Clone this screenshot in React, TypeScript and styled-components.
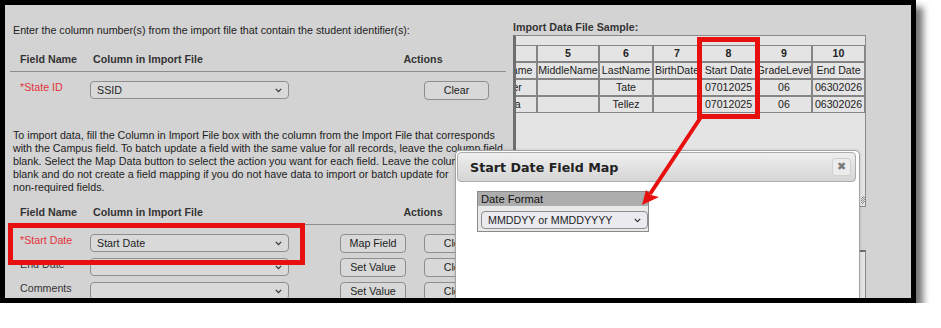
import styled, { createGlobalStyle } from "styled-components";

const GlobalStyle = createGlobalStyle`
  html, body {
    margin: 0;
    padding: 0;
    background: #fff;
  }
  body {
    font-family: "Liberation Sans", Arial, sans-serif;
    font-size: 10.7px;
    color: #222;
  }
`;

const Frame = styled.div`
  position: relative;
  width: 916px;
  height: 303px;
  box-sizing: border-box;
  border: 5px solid #000;
  overflow: hidden;
  box-shadow: 7px 7px 7px rgba(0, 0, 0, 0.55);
`;

const Screen = styled.div`
  display: flex;
  height: 100%;
  background: #d3d3d3;
`;

const LeftPane = styled.div`
  flex-shrink: 0;
  width: 496px;
  padding: 19px 0 0 5px;
`;

const Intro = styled.div`
  padding-left: 3px;
  line-height: 13px;
  white-space: nowrap;
`;

const HeaderRow = styled.div<{ $top: number }>`
  display: grid;
  grid-template-columns: 80px 250px 166px;
  align-items: center;
  height: 24px;
  margin-top: ${(p) => p.$top}px;
  border-bottom: 1px solid #8c8c8c;
  font-weight: bold;
  color: #333;
`;

const HeadCell = styled.div<{ $pad?: number; $center?: boolean }>`
  padding-left: ${(p) => p.$pad ?? 0}px;
  text-align: ${(p) => (p.$center ? "center" : "left")};
`;

const Rows = styled.div`
  display: flex;
  flex-direction: column;
  gap: 6px;
  padding-top: 9px;
`;

const Row = styled.div`
  display: grid;
  grid-template-columns: 80px 250px 84px 82px;
  height: 18px;
  align-items: start;
`;

const Label = styled.div<{ $required?: boolean }>`
  padding-left: 10px;
  line-height: 13px;
  white-space: nowrap;
  color: ${(p) => (p.$required ? "#e4323a" : "#333")};
`;

const Select = styled.div<{ $w: number; $bg?: string }>`
  display: flex;
  align-items: center;
  box-sizing: border-box;
  width: ${(p) => p.$w}px;
  height: 18px;
  padding: 0 6px 0 6px;
  border: 1px solid #8e8e8e;
  border-radius: 4px;
  background: ${(p) => p.$bg ?? "#d9d9d9"};
  color: #1e1e1e;
  white-space: nowrap;
`;

const ChevronBox = styled.span`
  display: flex;
  margin-left: auto;
`;

const Button = styled.div<{ $w: number }>`
  box-sizing: border-box;
  width: ${(p) => p.$w}px;
  height: 19px;
  line-height: 17px;
  border: 1px solid #8e8e8e;
  border-radius: 4px;
  background: #d8d8d8;
  text-align: center;
  color: #222;
  white-space: nowrap;
`;

const Para = styled.div`
  margin-top: 30px;
  padding-left: 3px;
  line-height: 13px;
  white-space: nowrap;
`;

const RightPane = styled.div`
  display: flex;
  flex-direction: column;
  width: 353px;
  margin-left: 7px;
  padding-top: 16px;
`;

const PanelTitle = styled.div`
  font-weight: bold;
  line-height: 13px;
  color: #333;
`;

const Panel = styled.div`
  position: relative;
  box-sizing: border-box;
  height: 172px;
  margin-top: 1px;
  padding-top: 9px;
  border: 1px solid #8a8a8a;
  border-left: 3px solid #6e6e6e;
  background: #e4e4e4;
`;

const LowerPanel = styled.div`
  flex: 1;
  margin-top: 43px;
  border-top: 2px solid #6e6e6e;
  border-right: 1px solid #8a8a8a;
  background: #e4e4e4;
`;

const Grip = styled.svg`
  position: absolute;
  right: 0;
  bottom: 2px;
`;

const Scroller = styled.div`
  overflow: hidden;
`;

const SampleTable = styled.table`
  margin-left: -37px;
  width: 386px;
  table-layout: fixed;
  border-collapse: separate;
  border-spacing: 0;
`;

const Col = styled.col<{ $w: number }>`
  width: ${(p) => p.$w}px;
`;

const Td = styled.td<{ $bold?: boolean }>`
  height: 15px;
  padding: 0;
  border: 1px solid #858585;
  font-weight: ${(p) => (p.$bold ? "bold" : "normal")};
`;

const CellText = styled.div`
  display: flex;
  justify-content: center;
  overflow: hidden;
  white-space: nowrap;
  line-height: 15px;
  font-size: 10.6px;
  color: #222;
`;

const Dialog = styled.div`
  position: absolute;
  left: 450px;
  top: 145px;
  bottom: -10px;
  width: 405px;
  box-sizing: border-box;
  padding: 1px 3px 0 1px;
  border: 1px solid #a3a3a3;
  border-radius: 5px 5px 0 0;
  background: #fff;
  box-shadow: 0 0 3px rgba(0, 0, 0, 0.15);
`;

const TitleBar = styled.div`
  display: flex;
  align-items: center;
  justify-content: space-between;
  box-sizing: border-box;
  height: 30px;
  padding: 0 4px 0 12px;
  border: 1px solid #acacac;
  border-radius: 4px;
  background: linear-gradient(#efefef, #d5d5d5);
`;

const Title = styled.div`
  font-family: "DejaVu Sans", Verdana, sans-serif;
  font-size: 12.7px;
  font-weight: bold;
  color: #222;
`;

const CloseButton = styled.div`
  box-sizing: border-box;
  width: 19px;
  height: 18px;
  border: 1px solid #d0d0d0;
  border-radius: 3px;
  background: #ececec;
  color: #7a7a7a;
  font-family: "DejaVu Sans", sans-serif;
  font-size: 11px;
  line-height: 16px;
  text-align: center;
`;

const DialogBody = styled.div`
  padding: 9px 0 0 20px;
`;

const DateBox = styled.div`
  box-sizing: border-box;
  width: 172px;
  border: 1px solid #8a8a8a;
`;

const DateHeader = styled.div`
  height: 14px;
  line-height: 14px;
  padding-left: 3px;
  background: #adadad;
  color: #111;
  font-size: 11.2px;
`;

const DateBody = styled.div`
  padding: 5px 0 2px 3px;
  background: #e9e9e9;
`;

const Callout = styled.div<{ $x: number; $y: number; $w: number; $h: number }>`
  position: absolute;
  left: ${(p) => p.$x}px;
  top: ${(p) => p.$y}px;
  width: ${(p) => p.$w}px;
  height: ${(p) => p.$h}px;
  box-sizing: border-box;
  border: 5px solid #e8100f;
`;

const Arrow = styled.svg`
  position: absolute;
  left: 625px;
  top: 105px;
`;

function Chevron() {
  return (
    <ChevronBox>
      <svg width="7" height="5" viewBox="0 0 7 5">
        <polyline points="0.8,0.8 3.5,3.6 6.2,0.8" fill="none" stroke="#333" strokeWidth="1.2" />
      </svg>
    </ChevronBox>
  );
}

const colWidths = [58, 62, 54, 48, 55, 56, 53];
const sampleRows = [
  ["", "5", "6", "7", "8", "9", "10"],
  ["FirstName", "MiddleName", "LastName", "BirthDate", "Start Date", "GradeLevel", "End Date"],
  ["Oliver", "", "Tate", "", "07012025", "06", "06302026"],
  ["Alicia", "", "Tellez", "", "07012025", "06", "06302026"],
];

const fieldRows = [
  { label: "*Start Date", required: true, value: "Start Date", action: "Map Field" },
  { label: "End Date", required: false, value: "", action: "Set Value" },
  { label: "Comments", required: false, value: "", action: "Set Value" },
];

export default function App() {
  return (
    <>
      <GlobalStyle />
      <Frame>
        <Screen>
          <LeftPane>
            <Intro>Enter the column number(s) from the import file that contain the student identifier(s):</Intro>
            <HeaderRow $top={10}>
              <HeadCell $pad={10}>Field Name</HeadCell>
              <HeadCell $pad={3}>Column in Import File</HeadCell>
              <HeadCell $center>Actions</HeadCell>
            </HeaderRow>
            <Rows>
              <Row>
                <Label $required>*State ID</Label>
                <Select $w={199}>
                  SSID
                  <Chevron />
                </Select>
                <div />
                <Button $w={65}>Clear</Button>
              </Row>
            </Rows>
            <Para>
              To import data, fill the Column in Import File box with the column from the Import File that corresponds
              <br />
              with the Campus field. To batch update a field with the same value for all records, leave the column field
              <br />
              blank. Select the Map Data button to select the action you want for each field. Leave the column field
              <br />
              blank and do not create a field mapping if you do not have data to import or batch update for
              <br />
              non-required fields.
            </Para>
            <HeaderRow $top={6}>
              <HeadCell $pad={10}>Field Name</HeadCell>
              <HeadCell $pad={3}>Column in Import File</HeadCell>
              <HeadCell $center>Actions</HeadCell>
            </HeaderRow>
            <Rows>
              {fieldRows.map((r) => (
                <Row key={r.label}>
                  <Label $required={r.required}>{r.label}</Label>
                  <Select $w={199}>
                    {r.value}
                    <Chevron />
                  </Select>
                  <Button $w={66}>{r.action}</Button>
                  <Button $w={65}>Clear</Button>
                </Row>
              ))}
            </Rows>
          </LeftPane>

          <RightPane>
            <PanelTitle>Import Data File Sample:</PanelTitle>
            <Panel>
              <Scroller>
                <SampleTable>
                  <colgroup>
                    {colWidths.map((w, i) => (
                      <Col key={i} $w={w} />
                    ))}
                  </colgroup>
                  <tbody>
                    {sampleRows.map((row, ri) => (
                      <tr key={ri}>
                        {row.map((cell, ci) => (
                          <Td key={ci} $bold={ri === 0}>
                            <CellText>{cell}</CellText>
                          </Td>
                        ))}
                      </tr>
                    ))}
                  </tbody>
                </SampleTable>
              </Scroller>
              <Grip width="4" height="8" viewBox="0 0 4 8">
                <path d="M0 3 L3 0 M0 5 L4 1 M0 7 L4 3 M1 8 L4 5" stroke="#777" strokeWidth="0.8" />
              </Grip>
            </Panel>
            <LowerPanel />
          </RightPane>
        </Screen>

        <Dialog>
          <TitleBar>
            <Title>Start Date Field Map</Title>
            <CloseButton>✖</CloseButton>
          </TitleBar>
          <DialogBody>
            <DateBox>
              <DateHeader>Date Format</DateHeader>
              <DateBody>
                <Select $w={167} $bg="#eaeaef">
                  MMDDYY or MMDDYYYY
                  <Chevron />
                </Select>
              </DateBody>
            </DateBox>
          </DialogBody>
        </Dialog>

        <Callout $x={692} $y={32} $w={63} $h={82} />
        <Callout $x={3} $y={218} $w={297} $h={42} />
        <Arrow width="80" height="100" viewBox="0 0 80 100">
          <line x1="71" y1="7" x2="20" y2="84" stroke="#e8100f" strokeWidth="4" />
          <polygon points="12,95 16,80 21,85 29,87" fill="#e8100f" />
        </Arrow>
      </Frame>
    </>
  );
}
